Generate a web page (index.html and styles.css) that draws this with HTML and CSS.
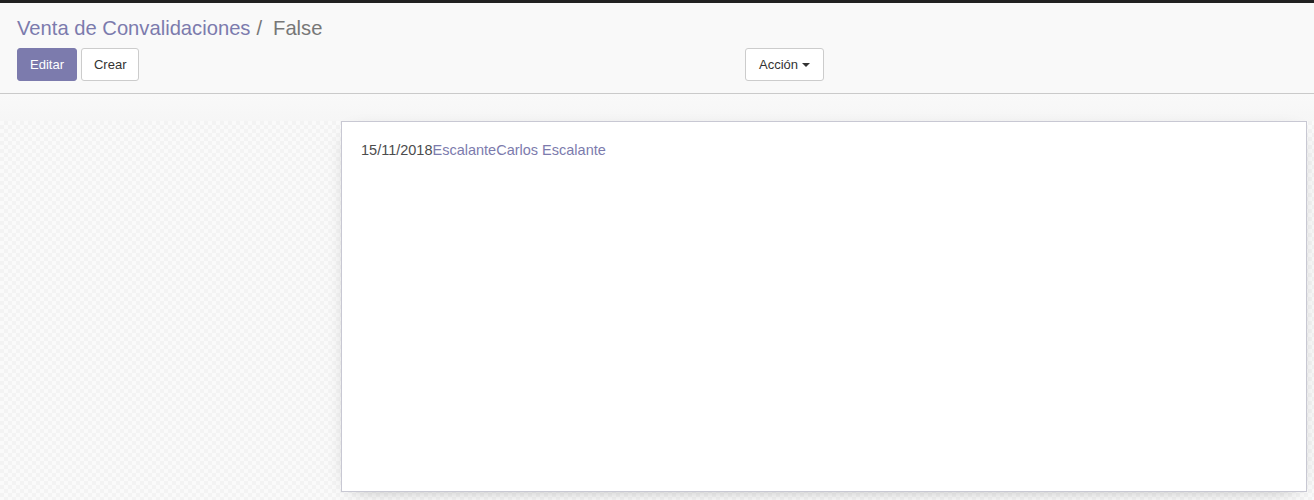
FILE: index.html
```html
<!DOCTYPE html>
<html lang="es">
<head>
<meta charset="utf-8">
<title>Venta de Convalidaciones</title>
<link rel="stylesheet" href="styles.css">
</head>
<body>
<div class="topbar"></div>
<div class="control-panel">
  <ol class="breadcrumb">
    <li class="crumb-link">Venta de Convalidaciones</li>
    <li class="crumb-sep">/</li>
    <li class="crumb-active">False</li>
  </ol>
  <div class="cp-row">
    <div class="cp-buttons">
      <button class="btn btn-primary">Editar</button>
      <button class="btn btn-default">Crear</button>
    </div>
    <div class="cp-sidebar">
      <button class="btn btn-default btn-action">Acción <span class="caret"></span></button>
    </div>
  </div>
</div>
<div class="form-view">
  <div class="statusbar"></div>
  <div class="sheet-bg">
    <div class="sheet">
      <p class="sheet-line"><span class="date">15/11/2018</span><a class="link">Escalante</a><a class="link">Carlos Escalante</a></p>
    </div>
  </div>
</div>
</body>
</html>
```

FILE: styles.css
```css
html, body {
  margin: 0;
  padding: 0;
  height: 100%;
}
body {
  font-family: "Liberation Sans", Arial, sans-serif;
  font-size: 13px;
  color: #4c4c4c;
  background: #f9f9f9;
  overflow: hidden;
}
.topbar {
  height: 3px;
  background: #212121;
}
.control-panel {
  background: #f9f9f9;
  border-bottom: 1px solid #cacaca;
  padding: 13px 16px 12px 17px;
}
.breadcrumb {
  list-style: none;
  margin: 0;
  padding: 0;
  display: flex;
  font-size: 20.2px;
  line-height: 24px;
  height: 25px;
}
.crumb-link {
  color: #7c7bad;
}
.crumb-sep {
  color: #777;
  padding: 0 11px 0 6px;
}
.crumb-active {
  color: #777;
}
.cp-row {
  display: flex;
  margin-top: 7px;
}
.cp-buttons {
  display: flex;
  gap: 4px;
  width: 728px;
}
.cp-sidebar {
  display: flex;
}
.btn {
  font-family: "Liberation Sans", Arial, sans-serif;
  font-size: 13px;
  line-height: 19px;
  padding: 6px 12px;
  height: 33px;
  border-radius: 3px;
  border: 1px solid #ccc;
  background: #fff;
  color: #333;
  cursor: pointer;
  display: inline-flex;
  align-items: center;
}
.btn-action {
  padding: 6px 13px;
}
.btn-primary {
  background: #7c7bad;
  border-color: #7c7bad;
  color: #fff;
}
.caret {
  display: inline-block;
  width: 0;
  height: 0;
  margin-left: 4px;
  border-top: 4px solid #333;
  border-left: 4px solid transparent;
  border-right: 4px solid transparent;
}
.form-view {
  display: flex;
  flex-direction: column;
}
.statusbar {
  height: 27px;
  background: linear-gradient(#f9f9f9, #f6f6f6);
}
.sheet-bg {
  height: 385px;
  padding: 0 7px 0 341px;
  background-color: #fafafa;
  background-image: conic-gradient(#f3f3f3 25%, transparent 0 50%, #f3f3f3 0 75%, transparent 0);
  background-size: 8px 8px;
}
.sheet {
  height: 371px;
  box-sizing: border-box;
  background: #fff;
  border: 1px solid #c8c8d3;
  box-shadow: 0 5px 20px -12px rgba(0,0,0,0.45);
  padding: 19px 19px;
}
.sheet-line {
  margin: 0;
  font-size: 14.5px;
  line-height: 18px;
}
.date {
  color: #4c4c4c;
}
.link {
  color: #7c7bad;
  text-decoration: none;
}
```
